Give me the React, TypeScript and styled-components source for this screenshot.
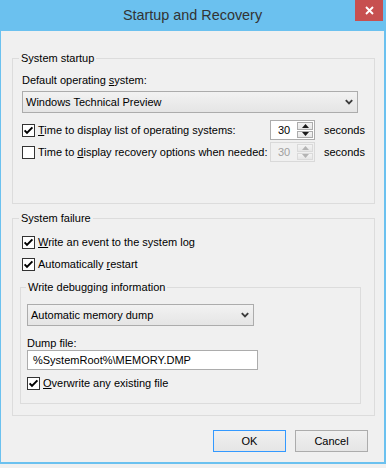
import React from 'react'
import styled, { createGlobalStyle } from 'styled-components'

const GlobalStyle = createGlobalStyle`
  html, body {
    margin: 0;
    padding: 0;
    background: #f0f0f0;
  }
  body {
    font-family: 'Liberation Sans', Arial, sans-serif;
    font-size: 11px;
    color: #000;
  }
  * { box-sizing: border-box; }
`

const Window = styled.div`
  width: 386px;
  display: flex;
  flex-direction: column;
  background: #f0f0f0;
  border: 0 solid #6bc1ef;
  border-width: 0 2px 2px 1px;
`

const TitleBar = styled.div`
  height: 31px;
  display: grid;
  grid-template-columns: 1fr auto 1fr;
  align-items: start;
  background: #6bc1ef;
`

const Title = styled.div`
  grid-column: 2;
  font-size: 14.4px;
  line-height: 31px;
  color: #333;
  white-space: nowrap;
`

const CloseButton = styled.div`
  grid-column: 3;
  justify-self: end;
  width: 28px;
  height: 21px;
  margin-right: 1px;
  display: flex;
  align-items: center;
  justify-content: center;
  background: #c75050;
`

const Body = styled.div`
  display: flex;
  flex-direction: column;
  gap: 7px;
  padding: 20px 9px 0 11px;
`

const Group = styled.fieldset<{ $pt: number; $pr: number; $pb: number; $pl: number; $mt?: number }>`
  margin: ${p => p.$mt ?? 0}px 0 0 0;
  min-width: 0;
  align-self: stretch;
  display: flex;
  flex-direction: column;
  align-items: flex-start;
  border: 1px solid #dcdcdc;
  padding: ${p => `${p.$pt}px ${p.$pr}px ${p.$pb}px ${p.$pl}px`};
`

const Legend = styled.legend<{ $offset: number }>`
  padding: 0 2px;
  margin-left: ${p => p.$offset}px;
  line-height: 15px;
`

const FieldLabel = styled.div<{ $mt?: number; $lh?: number }>`
  margin-top: ${p => p.$mt ?? 0}px;
  line-height: ${p => p.$lh ?? 15}px;
  white-space: nowrap;
`

const U = styled.span`
  text-decoration: underline;
  text-underline-offset: 1px;
`

const SelectBox = styled.div<{ $width: number; $mt: number }>`
  width: ${p => p.$width}px;
  height: 22px;
  margin-top: ${p => p.$mt}px;
  display: flex;
  align-items: center;
  justify-content: space-between;
  padding: 0 4px 0 3px;
  border: 1px solid #acacac;
  background: linear-gradient(#f2f2f2, #e5e5e5);
  white-space: nowrap;
`

const OptionRow = styled.div<{ $mt: number }>`
  margin-top: ${p => p.$mt}px;
  height: 20px;
  display: grid;
  grid-template-columns: 239px 45px auto;
  column-gap: 9px;
  align-items: center;
`

const CheckRow = styled.label<{ $mt?: number; $ml?: number }>`
  margin-top: ${p => p.$mt ?? 0}px;
  margin-left: ${p => p.$ml ?? 0}px;
  height: 16px;
  display: flex;
  align-items: center;
  gap: 3px;
  white-space: nowrap;
`

const Box = styled.span`
  width: 13px;
  height: 13px;
  flex: none;
  display: flex;
  align-items: center;
  justify-content: center;
  border: 1px solid #333;
  background: #fff;
`

const SpinBox = styled.div<{ $disabled?: boolean }>`
  width: 45px;
  height: 20px;
  display: flex;
  border: 1px solid ${p => (p.$disabled ? '#d9d9d9' : '#acacac')};
  background: ${p => (p.$disabled ? '#f0f0f0' : '#fff')};
  color: ${p => (p.$disabled ? '#a0a0a0' : '#000')};
`

const SpinValue = styled.span`
  flex: 1;
  padding-left: 7px;
  line-height: 18px;
`

const SpinButtons = styled.div`
  width: 17px;
  display: flex;
  flex-direction: column;
  gap: 1px;
  padding: 1px 1px 1px 0;
`

const SpinButton = styled.div<{ $disabled?: boolean }>`
  flex: 1;
  display: flex;
  align-items: center;
  justify-content: center;
  border: 1px solid ${p => (p.$disabled ? '#dadada' : '#acacac')};
  background: linear-gradient(#f4f4f4, #e6e6e6);
`

const Units = styled.span`
  white-space: nowrap;
`

const TextField = styled.div`
  width: 231px;
  height: 20px;
  padding-left: 5px;
  line-height: 18px;
  border: 1px solid #acacac;
  background: #fff;
  white-space: nowrap;
`

const Footer = styled.div`
  display: flex;
  justify-content: flex-end;
  gap: 9px;
  padding: 14px 16px 10px 0;
`

const Button = styled.div<{ $default?: boolean }>`
  width: 73px;
  height: 22px;
  display: flex;
  align-items: center;
  justify-content: center;
  border: 1px solid ${p => (p.$default ? '#3399ff' : '#acacac')};
  background: linear-gradient(#f0f0f0, #e5e5e5);
`

const Chevron = () => (
  <svg width="8" height="6" viewBox="0 0 8 6">
    <path d="M0.8 1.2 L4 4.4 L7.2 1.2" fill="none" stroke="#3c3c3c" strokeWidth="1.9" />
  </svg>
)

const Check = ({ checked }: { checked?: boolean }) => (
  <Box>
    {checked && (
      <svg width="11" height="11" viewBox="0 0 11 11">
        <path d="M1.6 5.4 L4 7.9 L9.4 2.4" fill="none" stroke="#000" strokeWidth="2" />
      </svg>
    )}
  </Box>
)

const Arrow = ({ up, disabled }: { up?: boolean; disabled?: boolean }) => (
  <svg width="7" height="4" viewBox="0 0 7 4">
    <path d={up ? 'M0 4 L3.5 0 L7 4 Z' : 'M0 0 L7 0 L3.5 4 Z'} fill={disabled ? '#b4b4b4' : '#1a1a1a'} />
  </svg>
)

const Spinner = ({ value, disabled }: { value: string; disabled?: boolean }) => (
  <SpinBox $disabled={disabled}>
    <SpinValue>{value}</SpinValue>
    <SpinButtons>
      <SpinButton $disabled={disabled}>
        <Arrow up disabled={disabled} />
      </SpinButton>
      <SpinButton $disabled={disabled}>
        <Arrow disabled={disabled} />
      </SpinButton>
    </SpinButtons>
  </SpinBox>
)

const Select = ({ value, width, mt }: { value: string; width: number; mt: number }) => (
  <SelectBox $width={width} $mt={mt}>
    <span>{value}</span>
    <Chevron />
  </SelectBox>
)

const App = () => (
  <>
    <GlobalStyle />
    <Window>
      <TitleBar>
        <Title>Startup and Recovery</Title>
        <CloseButton>
          <svg width="9" height="9" viewBox="0 0 9 9">
            <path d="M1 1 L8 8 M8 1 L1 8" stroke="#fff" strokeWidth="1.9" />
          </svg>
        </CloseButton>
      </TitleBar>

      <Body>
        <Group $pt={7} $pr={16} $pb={41} $pl={9}>
          <Legend $offset={-3}>System startup</Legend>
          <FieldLabel>
            Default operating <U>s</U>ystem:
          </FieldLabel>
          <Select value="Windows Technical Preview" width={336} mt={3} />
          <OptionRow $mt={7}>
            <CheckRow>
              <Check checked />
              <span>
                <U>T</U>ime to display list of operating systems:
              </span>
            </CheckRow>
            <Spinner value="30" />
            <Units>seconds</Units>
          </OptionRow>
          <OptionRow $mt={2}>
            <CheckRow>
              <Check />
              <span>
                Time to <U>d</U>isplay recovery options when needed:
              </span>
            </CheckRow>
            <Spinner value="30" disabled />
            <Units>seconds</Units>
          </OptionRow>
        </Group>

        <Group $pt={8} $pr={13} $pb={11} $pl={7}>
          <Legend $offset={-1}>System failure</Legend>
          <CheckRow $ml={2}>
            <Check checked />
            <span>
              <U>W</U>rite an event to the system log
            </span>
          </CheckRow>
          <CheckRow $ml={2} $mt={6}>
            <Check checked />
            <span>
              Automatically <U>r</U>estart
            </span>
          </CheckRow>

          <Group $mt={8} $pt={9} $pr={6} $pb={12} $pl={6}>
            <Legend $offset={-1}>Write debugging information</Legend>
            <Select value="Automatic memory dump" width={227} mt={0} />
            <FieldLabel $mt={11} $lh={13}>
              Dump file:
            </FieldLabel>
            <TextField>%SystemRoot%\MEMORY.DMP</TextField>
            <CheckRow $mt={5}>
              <Check checked />
              <span>
                <U>O</U>verwrite any existing file
              </span>
            </CheckRow>
          </Group>
        </Group>
      </Body>

      <Footer>
        <Button $default>OK</Button>
        <Button>Cancel</Button>
      </Footer>
    </Window>
  </>
)

export default App
